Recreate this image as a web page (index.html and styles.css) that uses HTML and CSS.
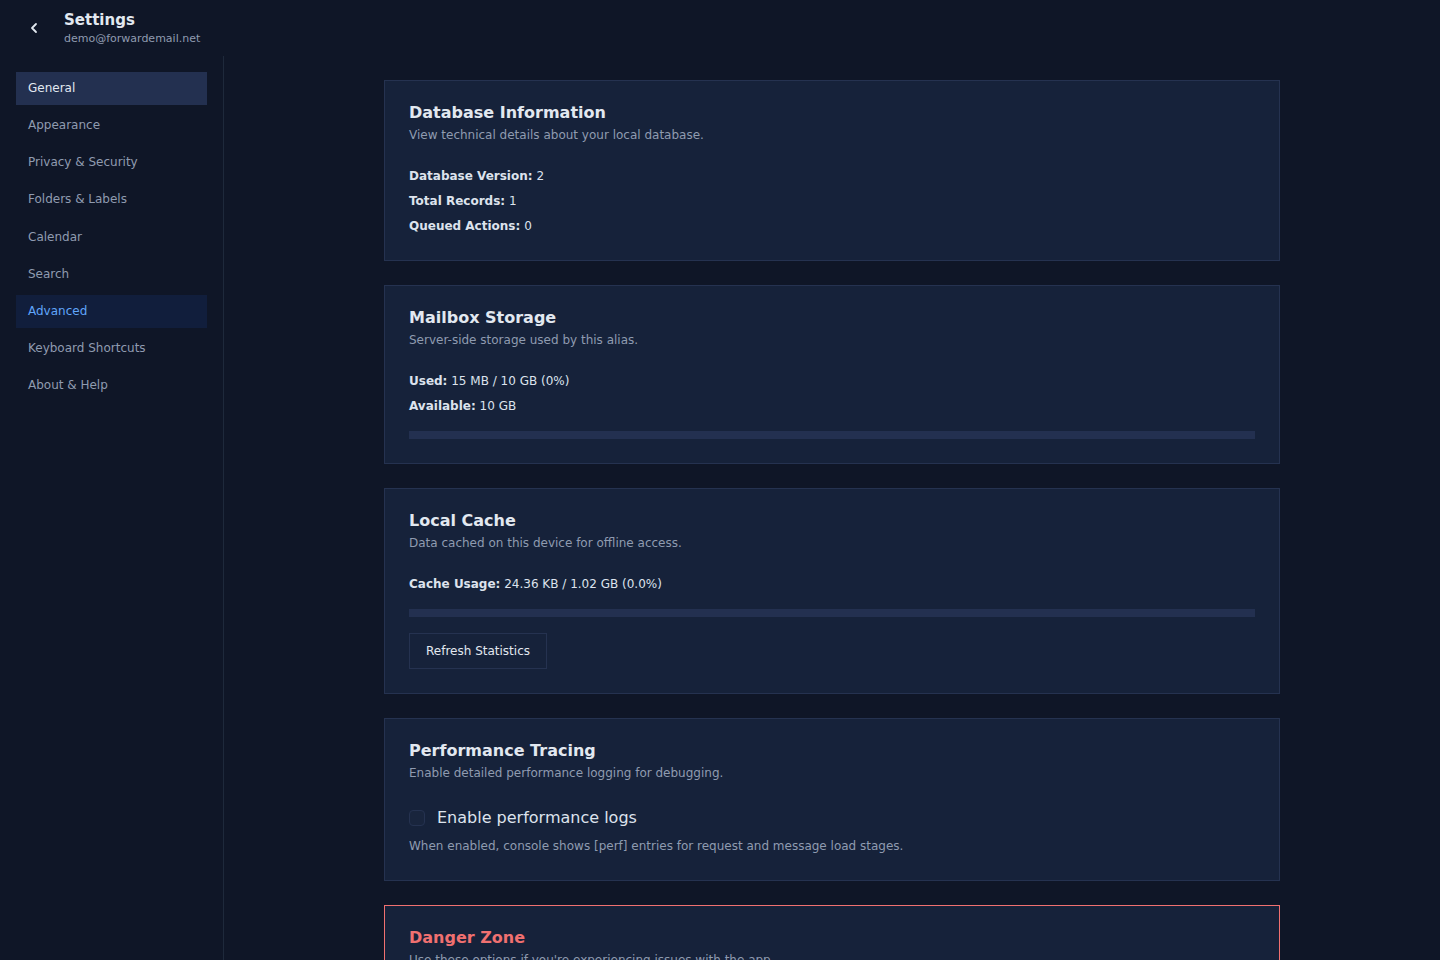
FILE: index.html
```html
<!DOCTYPE html>
<html lang="en">

<head>
    <meta charset="UTF-8">
    <meta name="viewport" content="width=device-width, initial-scale=1.0">
    <title>Settings</title>
    <link rel="stylesheet" href="styles.css">
</head>

<body>
    <header class="topbar">
        <button class="back-button" aria-label="Back">
            <svg width="16" height="16" viewBox="0 0 16 16" fill="none" stroke="currentColor" stroke-width="1.8" stroke-linecap="round" stroke-linejoin="round">
                <path d="M11 4L7 8L11 12" />
            </svg>
        </button>
        <div class="topbar-text">
            <div class="topbar-title">Settings</div>
            <div class="topbar-email">demo@forwardemail.net</div>
        </div>
    </header>

    <div class="layout">
        <nav class="sidebar">
            <a class="nav-item selected">General</a>
            <a class="nav-item">Appearance</a>
            <a class="nav-item">Privacy &amp; Security</a>
            <a class="nav-item">Folders &amp; Labels</a>
            <a class="nav-item">Calendar</a>
            <a class="nav-item">Search</a>
            <a class="nav-item active">Advanced</a>
            <a class="nav-item">Keyboard Shortcuts</a>
            <a class="nav-item">About &amp; Help</a>
        </nav>

        <main class="content">
            <section class="card">
                <h2 class="card-title">Database Information</h2>
                <p class="card-desc">View technical details about your local database.</p>
                <div class="stats">
                    <div class="stat"><strong>Database Version:</strong> 2</div>
                    <div class="stat"><strong>Total Records:</strong> 1</div>
                    <div class="stat"><strong>Queued Actions:</strong> 0</div>
                </div>
            </section>

            <section class="card">
                <h2 class="card-title">Mailbox Storage</h2>
                <p class="card-desc">Server-side storage used by this alias.</p>
                <div class="stats">
                    <div class="stat"><strong>Used:</strong> 15 MB / 10 GB (0%)</div>
                    <div class="stat"><strong>Available:</strong> 10 GB</div>
                </div>
                <div class="progress"></div>
            </section>

            <section class="card">
                <h2 class="card-title">Local Cache</h2>
                <p class="card-desc">Data cached on this device for offline access.</p>
                <div class="stats">
                    <div class="stat"><strong>Cache Usage:</strong> 24.36 KB / 1.02 GB (0.0%)</div>
                </div>
                <div class="progress"></div>
                <button class="button">Refresh Statistics</button>
            </section>

            <section class="card">
                <h2 class="card-title">Performance Tracing</h2>
                <p class="card-desc">Enable detailed performance logging for debugging.</p>
                <label class="check-row">
                    <span class="checkbox"></span>
                    <span>Enable performance logs</span>
                </label>
                <p class="card-desc check-hint">When enabled, console shows [perf] entries for request and message load stages.</p>
            </section>

            <section class="card danger">
                <h2 class="card-title">Danger Zone</h2>
                <p class="card-desc">Use these options if you're experiencing issues with the app.</p>
            </section>
        </main>
    </div>
</body>

</html>
```

FILE: styles.css
```css
* {
    margin: 0;
    padding: 0;
    box-sizing: border-box;
}

body {
    height: 100vh;
    overflow: hidden;
    display: flex;
    flex-direction: column;
    background-color: #0f1627;
    color: #dde3ed;
    font-family: "DejaVu Sans", sans-serif;
    font-size: 12px;
}

.topbar {
    height: 56px;
    flex-shrink: 0;
    display: flex;
    align-items: center;
    gap: 14px;
    padding: 0 16px;
}

.back-button {
    width: 34px;
    height: 34px;
    display: flex;
    align-items: center;
    justify-content: center;
    background: none;
    border: none;
    color: #e2e8f0;
}

.topbar-title {
    font-size: 15px;
    font-weight: bold;
    line-height: 20px;
    margin-top: 1px;
    color: #e2e8f0;
}

.topbar-email {
    font-size: 11px;
    line-height: 16px;
    margin-top: 1px;
    color: #8f9bb0;
}

.layout {
    flex: 1;
    min-height: 0;
    display: flex;
}

.sidebar {
    width: 224px;
    flex-shrink: 0;
    display: flex;
    flex-direction: column;
    gap: 4px;
    padding: 16px;
    border-right: 1px solid #1e293b;
}

.nav-item {
    height: 33.125px;
    padding: 9px 12px 0;
    font-size: 12px;
    line-height: 14px;
    color: #8f9bb0;
}

.nav-item.selected {
    background-color: #233050;
    color: #e2e8f0;
}

.nav-item.active {
    background-color: #111e3c;
    color: #60a5fa;
}

.content {
    flex: 1;
    min-width: 0;
    overflow: hidden;
    display: flex;
    flex-direction: column;
    align-items: center;
    gap: 24px;
    padding: 24px;
}

.card {
    width: 896px;
    flex-shrink: 0;
    padding: 24px;
    background-color: #16223a;
    border: 1px solid #253250;
}

.card-title {
    font-size: 16px;
    font-weight: bold;
    line-height: 15px;
    color: #e2e8f0;
}

.card-desc {
    margin-top: 6px;
    font-size: 12px;
    line-height: 18px;
    color: #8f9bb0;
}

.stats {
    margin-top: 22px;
    display: flex;
    flex-direction: column;
    gap: 5px;
}

.stat {
    font-size: 12px;
    line-height: 20px;
}

.stat strong {
    font-weight: bold;
}

.progress {
    height: 8px;
    margin-top: 15px;
    background-color: #233050;
}

.button {
    display: block;
    margin-top: 16px;
    height: 36px;
    padding: 0 16px;
    background-color: #16223a;
    border: 1px solid #253250;
    color: #e2e8f0;
    font-family: inherit;
    font-size: 12px;
}

.check-row {
    margin-top: 24px;
    display: flex;
    align-items: center;
    gap: 12px;
    font-size: 16px;
    line-height: 24px;
}

.checkbox {
    width: 16px;
    height: 16px;
    background-color: #19253d;
    border: 1px solid #253250;
    border-radius: 4px;
}

.check-hint {
    margin-top: 7px;
    margin-bottom: 1px;
}

.danger {
    border-color: #f07070;
}

.danger .card-title {
    color: #f07070;
}
```
